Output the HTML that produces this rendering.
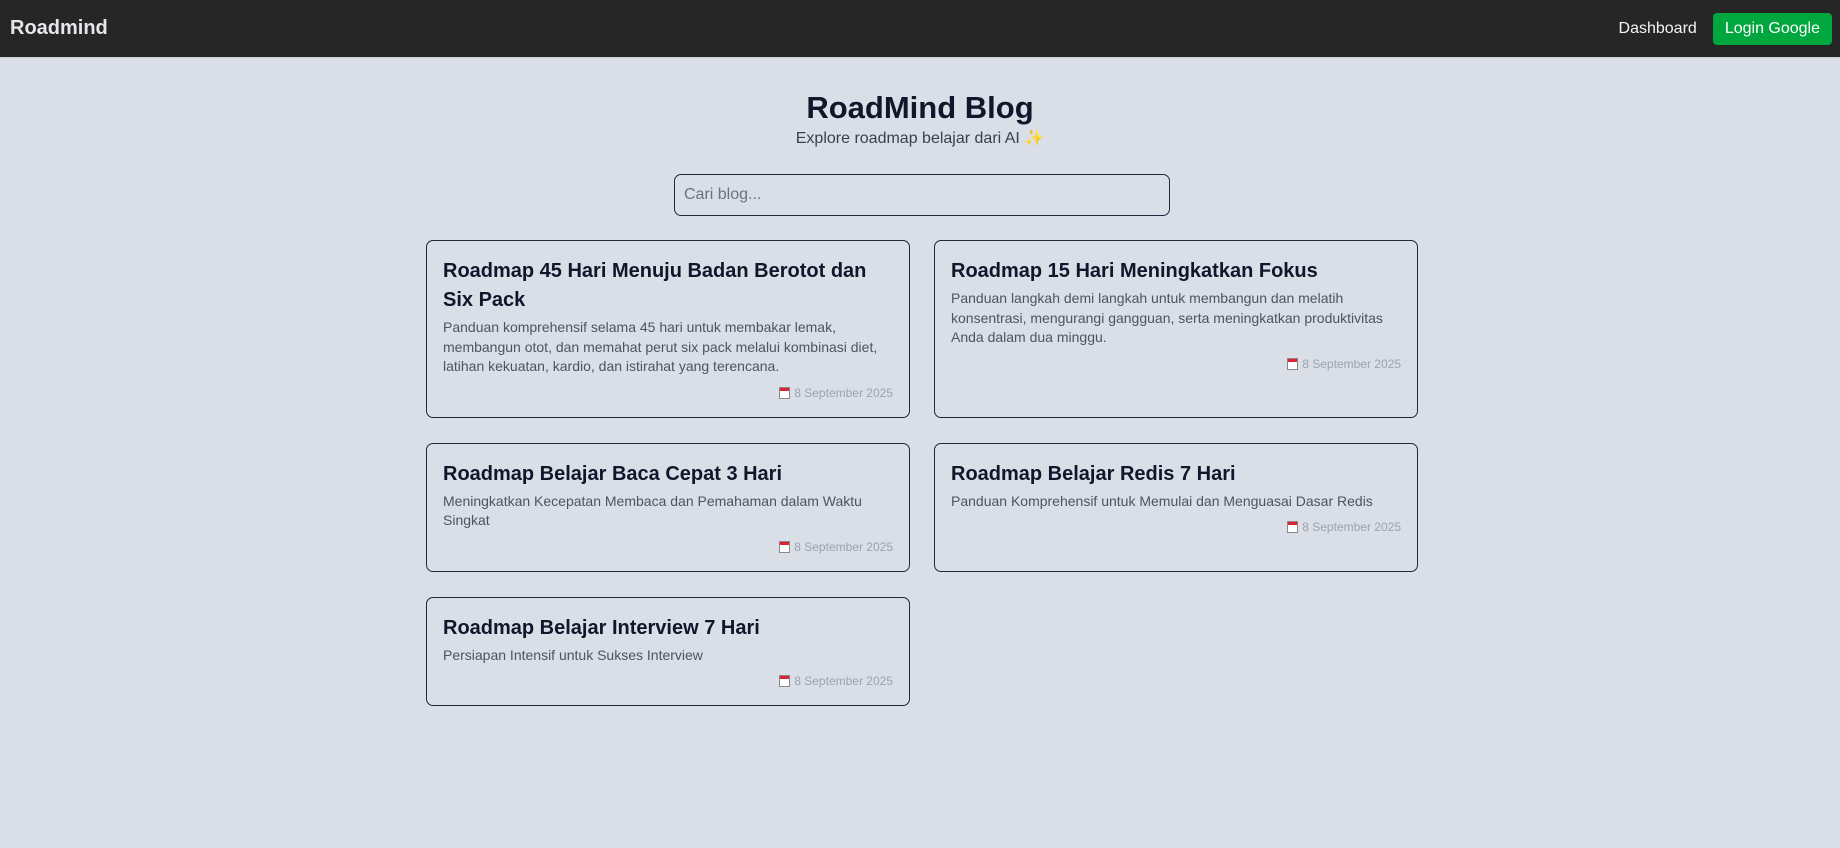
<!DOCTYPE html>
<html><head><meta charset="utf-8"><style>
*{box-sizing:border-box;margin:0;padding:0}
body{width:1840px;height:848px;background:#d9dee7;font-family:"Liberation Sans",Arial,sans-serif;overflow:hidden}
nav{height:58px;background:#262626;display:flex;align-items:center;justify-content:space-between;padding:0 8px 0 10px;border-bottom:1px solid #ccc}
.logo{color:#e5e7eb;font-weight:bold;font-size:20px}
.right{display:flex;align-items:center}
.dash{color:#f3f4f6;font-size:16px;margin-right:16px}
.btn{background:#00a63e;color:#fff;font-size:16px;padding:0 12px;height:32px;line-height:32px;border-radius:4px}
h1{text-align:center;font-size:31px;color:#0f172a;margin-top:32px;line-height:36px}
.sub{text-align:center;color:#374151;font-size:16px;margin-top:2px}
.search{width:496px;height:42px;margin:26px auto 0;border:1.5px solid #1e293b;border-radius:7px;padding-left:9px;line-height:39px;color:#6b7280;font-size:16px;position:relative;left:2px}
.grid{width:992px;margin:24px auto 0;display:grid;grid-template-columns:484px 484px;gap:25px 24px;position:relative;left:2px}
.card{border:1.5px solid #1e293b;border-radius:7px;padding:16px 16px 16px}
.card h2{font-size:20px;line-height:29px;color:#0f172a}
.card p{font-size:14px;line-height:19.5px;color:#4b5563;margin-top:3px}
.date{text-align:right;font-size:12px;color:#9ca3af;margin-top:8px;line-height:16px}
.cal{display:inline-block;width:11px;height:12px;border:1px solid #888;background:#fff;vertical-align:-2px;margin-right:4px;position:relative}
.cal:before{content:"";position:absolute;left:0;right:0;top:0;height:3px;background:#d23}
</style></head><body>
<nav><div class="logo">Roadmind</div><div class="right"><span class="dash">Dashboard</span><span class="btn">Login Google</span></div></nav>
<h1>RoadMind Blog</h1>
<div class="sub">Explore roadmap belajar dari AI <span style="color:#e8c300">✨</span></div>
<div class="search">Cari blog...</div>
<div class="grid">
<div class="card"><h2>Roadmap 45 Hari Menuju Badan Berotot dan Six Pack</h2><p>Panduan komprehensif selama 45 hari untuk membakar lemak, membangun otot, dan memahat perut six pack melalui kombinasi diet, latihan kekuatan, kardio, dan istirahat yang terencana.</p><div class="date"><span class="cal"></span>8 September 2025</div></div>
<div class="card"><h2>Roadmap 15 Hari Meningkatkan Fokus</h2><p>Panduan langkah demi langkah untuk membangun dan melatih konsentrasi, mengurangi gangguan, serta meningkatkan produktivitas Anda dalam dua minggu.</p><div class="date"><span class="cal"></span>8 September 2025</div></div>
<div class="card"><h2>Roadmap Belajar Baca Cepat 3 Hari</h2><p>Meningkatkan Kecepatan Membaca dan Pemahaman dalam Waktu Singkat</p><div class="date"><span class="cal"></span>8 September 2025</div></div>
<div class="card"><h2>Roadmap Belajar Redis 7 Hari</h2><p>Panduan Komprehensif untuk Memulai dan Menguasai Dasar Redis</p><div class="date"><span class="cal"></span>8 September 2025</div></div>
<div class="card"><h2>Roadmap Belajar Interview 7 Hari</h2><p>Persiapan Intensif untuk Sukses Interview</p><div class="date"><span class="cal"></span>8 September 2025</div></div>
</div>
</body></html>
